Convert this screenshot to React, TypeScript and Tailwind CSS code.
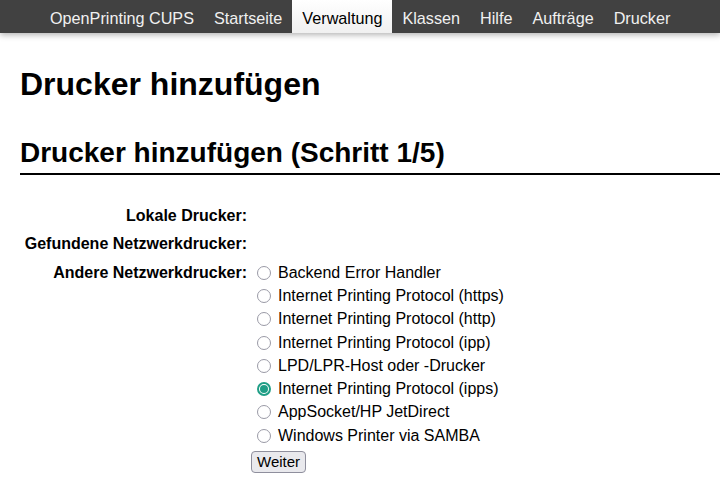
const navItems = ["OpenPrinting CUPS", "Startseite", "Verwaltung", "Klassen", "Hilfe", "Aufträge", "Drucker"];

const backends = [
  "Backend Error Handler",
  "Internet Printing Protocol (https)",
  "Internet Printing Protocol (http)",
  "Internet Printing Protocol (ipp)",
  "LPD/LPR-Host oder -Drucker",
  "Internet Printing Protocol (ipps)",
  "AppSocket/HP JetDirect",
  "Windows Printer via SAMBA",
];

function Radio({ checked }: { checked: boolean }) {
  return checked ? (
    <span className="w-[14px] h-[14px] rounded-full border-[2px] border-[#1f9e86] bg-white flex items-center justify-center shrink-0">
      <span className="w-[8px] h-[8px] rounded-full bg-[#1f9e86]" />
    </span>
  ) : (
    <span className="w-[14px] h-[14px] rounded-full border border-[#9a9aa6] bg-white shrink-0" />
  );
}

export default function App() {
  const selected = 5;

  return (
    <div className="min-h-[495px] bg-white text-black font-['Liberation_Sans',Arial,sans-serif]">
      {/* Navigation */}
      <div className="h-[33px] bg-[#414141] flex pl-[40px] shadow-[0_2px_6px_rgba(0,0,0,0.3)] relative">
        {navItems.map((item) => (
          <div
            key={item}
            className={`px-[10px] h-[33px] pt-[3px] flex items-center text-[16.2px] ${
              item === "Verwaltung"
                ? "bg-gradient-to-b from-white to-[#f0f0f0] text-black"
                : "text-[#f0f0f0]"
            }`}
          >
            {item}
          </div>
        ))}
      </div>

      <div className="pl-[20px]">
        <h1 className="mt-[33px] text-[32px] leading-[36px] font-bold">Drucker hinzufügen</h1>
        <h2 className="mt-[35px] text-[28px] leading-[32px] font-bold pb-[4px] border-b-2 border-black">
          Drucker hinzufügen (Schritt 1/5)
        </h2>

        <div className="mt-[27px] text-[16px]">
          <div className="flex h-[28px] items-center">
            <div className="w-[227px] text-right font-bold">Lokale Drucker:</div>
          </div>
          <div className="flex h-[28px] items-center">
            <div className="w-[227px] text-right font-bold">Gefundene Netzwerkdrucker:</div>
          </div>
          <div className="flex mt-[3px]">
            <div className="w-[227px] text-right font-bold h-[23.3px] leading-[23.3px]">
              Andere Netzwerkdrucker:
            </div>
            <div className="pl-[10px]">
              {backends.map((b, i) => (
                <div key={b} className="flex items-center h-[23.3px] gap-[7px]">
                  <Radio checked={i === selected} />
                  <span>{b}</span>
                </div>
              ))}
              <button className="mt-[4px] -ml-[6px] h-[22px] px-[5px] text-[15px] leading-[18px] bg-[#e9e9ed] border border-[#8f8f9d] rounded-[4px]">
                Weiter
              </button>
            </div>
          </div>
        </div>
      </div>
    </div>
  );
}
